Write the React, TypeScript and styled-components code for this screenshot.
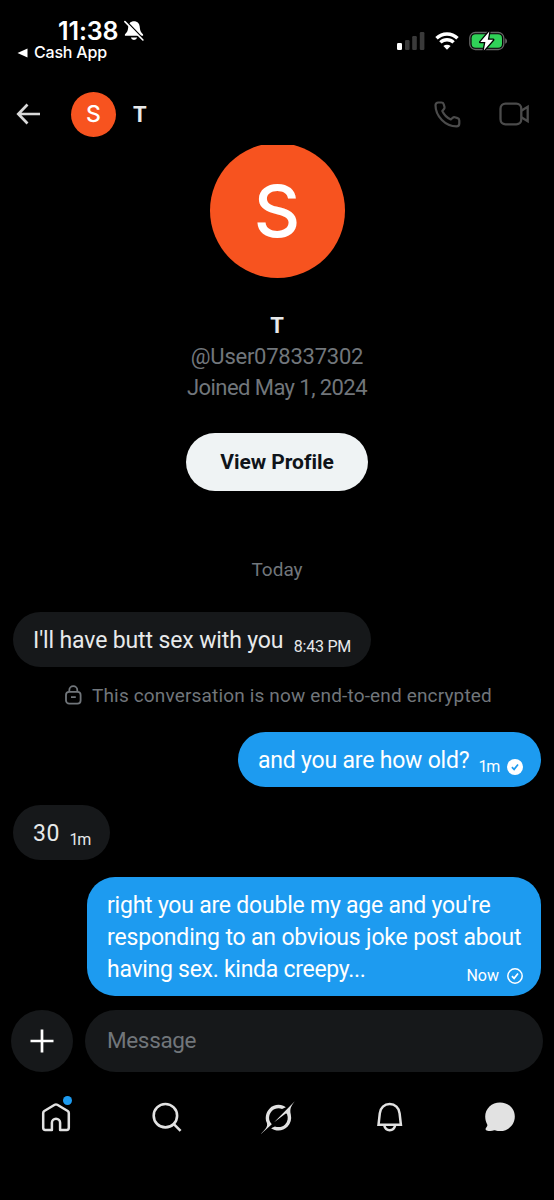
import React from 'react';
import styled, { createGlobalStyle } from 'styled-components';

const Global = createGlobalStyle`
  * { box-sizing: border-box; }
  body { margin: 0; background: #000; }
  button { border: 0; padding: 0; background: none; font: inherit; color: inherit; }
  svg { display: block; flex: none; }
`;

const Screen = styled.div`
  width: 554px;
  height: 1200px;
  display: flex;
  flex-direction: column;
  background: #000;
  color: #e7e9ea;
  overflow: hidden;
  font-family: Roboto, 'Liberation Sans', sans-serif;
`;

const StatusBar = styled.div`
  height: 83px;
  flex: none;
  display: flex;
  justify-content: space-between;
  padding: 18px 46px 0 17px;
  font-family: Inter, sans-serif;
  color: #fff;
`;
const ClockRow = styled.div`
  display: flex;
  align-items: center;
  gap: 5px;
  height: 26px;
  padding-left: 41px;
  font-size: 25px;
  line-height: 26px;
  font-weight: 600;
  letter-spacing: -0.1px;
`;
const BackToApp = styled.div`
  display: flex;
  align-items: center;
  gap: 6px;
  height: 17px;
  font-size: 16px;
  line-height: 17px;
  font-weight: 500;
  letter-spacing: -0.2px;
`;
const Signals = styled.div`
  display: flex;
  align-items: center;
  height: 46px;
  gap: 10px;
`;

const Header = styled.header`
  height: 62px;
  flex: none;
  display: flex;
  align-items: center;
  padding: 0 24px 0 16px;
`;
const Avatar = styled.div<{ $size: number; $font: number }>`
  width: ${(p) => p.$size}px;
  height: ${(p) => p.$size}px;
  flex: none;
  border-radius: 50%;
  background: #f7531f;
  color: #fff;
  display: flex;
  align-items: center;
  justify-content: center;
  font-family: Inter, sans-serif;
  font-weight: 500;
  font-size: ${(p) => p.$font}px;
`;
const HeaderAvatar = styled(Avatar)`
  margin-left: 30px;
`;
const HeaderName = styled.div`
  flex: 1;
  margin-left: 17px;
  font: 700 22px Roboto, sans-serif;
`;
const CallActions = styled.div`
  display: flex;
  align-items: center;
  gap: 38px;
  color: #4b4b4b;
`;

const Thread = styled.main`
  height: 864px;
  flex: none;
  overflow: hidden;
  display: flex;
  flex-direction: column;
  padding: 0 13px;
`;
const Profile = styled.section`
  display: flex;
  flex-direction: column;
  align-items: center;
  margin-top: -2px;
`;
const ProfileName = styled.div`
  margin-top: 32px;
  font: 700 22px/31px Roboto, sans-serif;
`;
const ProfileLine = styled.div<{ $spacing: number }>`
  font-size: 22px;
  line-height: 31px;
  color: #71767b;
  letter-spacing: ${(p) => p.$spacing}px;
`;
const ViewProfile = styled.button`
  width: 182px;
  height: 58px;
  margin-top: 30px;
  border-radius: 29px;
  background: #eff3f4;
  color: #0f1419;
  font: 700 21px Roboto, sans-serif;
  letter-spacing: -0.05px;
`;
const DayLabel = styled.div`
  margin-top: 66px;
  text-align: center;
  font-size: 19px;
  line-height: 26px;
  letter-spacing: 0px;
  color: #71767b;
`;
const Bubble = styled.div<{ $mine?: boolean; $width: number; $top: number; $tall?: boolean }>`
  align-self: ${(p) => (p.$mine ? 'flex-end' : 'flex-start')};
  width: ${(p) => p.$width}px;
  height: ${(p) => (p.$tall ? 119 : 55)}px;
  flex: none;
  margin-top: ${(p) => p.$top}px;
  padding: 13px 17px 0 20px;
  border-radius: 28px;
  background: ${(p) => (p.$mine ? '#1d9bf0' : '#16181a')};
  color: ${(p) => (p.$mine ? '#fff' : '#e7e9ea')};
  display: flex;
  justify-content: space-between;
`;
const Words = styled.div<{ $spacing?: number }>`
  font-size: 23px;
  line-height: 32px;
  white-space: nowrap;
  letter-spacing: ${(p) => p.$spacing ?? 0}px;
`;
const Lines = styled.div`
  display: flex;
  flex-direction: column;
`;
const LastLine = styled.div`
  display: flex;
  justify-content: space-between;
  width: 417px;
`;
const Meta = styled.div<{ $inset?: number; $spacing?: number }>`
  display: flex;
  align-items: center;
  gap: 7px;
  height: 17px;
  margin-top: 13px;
  margin-right: ${(p) => p.$inset ?? 0}px;
  font-size: 16px;
  letter-spacing: ${(p) => p.$spacing ?? 0}px;
  white-space: nowrap;
`;
const Notice = styled.div`
  display: flex;
  align-items: center;
  height: 26px;
  flex: none;
  margin: 15px 0 0 52px;
  gap: 10px;
  font-size: 19px;
  letter-spacing: 0.16px;
  color: #71767b;
  white-space: nowrap;
`;

const Composer = styled.footer`
  height: 63px;
  flex: none;
  display: flex;
  align-items: center;
  gap: 12px;
  padding: 0 11px;
`;
const AddButton = styled.button`
  width: 62px;
  height: 62px;
  border-radius: 50%;
  background: #16181a;
  display: flex;
  align-items: center;
  justify-content: center;
`;
const Field = styled.div`
  flex: 1;
  height: 62px;
  border-radius: 31px;
  background: #16181a;
  color: #71767b;
  padding-left: 22px;
  font-size: 22.5px;
  line-height: 61px;
  letter-spacing: -0.35px;
`;
const TabBar = styled.nav`
  flex: 1;
  display: flex;
  align-items: flex-start;
  justify-content: space-between;
  padding: 24px 33.5px 0 34.5px;
  color: #e2e2e2;
`;
const Tab = styled.button`
  position: relative;
  width: 42px;
  height: 42px;
  display: flex;
  align-items: center;
  justify-content: center;
`;
const Unread = styled.span`
  position: absolute;
  top: 0;
  right: 5px;
  width: 9px;
  height: 9px;
  border-radius: 50%;
  background: #1d9bf0;
`;

const MutedBell = () => (
  <svg width="20" height="22" viewBox="0 0 20 22">
    <path d="M10 1.2C6.700 1.200 4.600 3.300 4.300 6.500 3.900 11 3.300 12 .9 14.400v1.400h18.200v-1.400C16.700 12 16.100 11 15.700 6.500 15.400 3.300 13.300 1.200 10 1.200zM6.800 17.600a3.300 3.300 0 0 0 6.400 0z" fill="#fff" />
    <path d="M2.400 1.300l17.400 18.200" stroke="#000" strokeWidth="1.600" />
    <path d="M.9 1.600l18 18.400" stroke="#fff" strokeWidth="1.600" strokeLinecap="round" />
  </svg>
);
const Cellular = () => (
  <svg width="28" height="18" viewBox="0 0 28 18">
    <rect x="0" y="11" width="5" height="7" rx="1.3" fill="#fff" />
    <g fill="#3a3a3a">
      <rect x="8" y="8" width="4.6" height="10" rx="1.2" />
      <rect x="15.2" y="4" width="4.6" height="14" rx="1.2" />
      <rect x="22.8" y="0" width="4.6" height="18" rx="1.2" />
    </g>
  </svg>
);
const Wifi = () => (
  <svg width="24" height="18" viewBox="0 0 24 18">
    <g fill="none" stroke="#fff" strokeWidth="3.4">
      <path d="M1.5 6.3a15 15 0 0 1 21 0" />
      <path d="M5.4 10.4a9.4 9.4 0 0 1 13.2 0" />
    </g>
    <path d="M8.4 14.1a5.2 5.2 0 0 1 7.2 0L12 17.7z" fill="#fff" />
  </svg>
);
const Battery = () => (
  <svg width="39" height="20" viewBox="0 0 39 20">
    <rect x=".8" y="1.5" width="34" height="17" rx="5.5" fill="none" stroke="#656565" strokeWidth="1.3" />
    <rect x="2.6" y="3.3" width="30.4" height="13.4" rx="4" fill="#30d158" />
    <path d="M36.2 7.2v5.6c2.4-1 2.4-4.6 0-5.6z" fill="#656565" />
    <path d="M20.3.5L11.3 11h5.1L14.8 19.4 24.1 8.8h-5.3z" fill="#fff" stroke="#000" strokeWidth="2.6" paintOrder="stroke" strokeLinejoin="round" />
  </svg>
);
const Lock = () => (
  <svg width="17" height="20" viewBox="0 0 17 20" fill="none" stroke="#71767b" strokeWidth="1.8">
    <rect x="1" y="6.8" width="14.6" height="11.8" rx="3.2" />
    <path d="M4.3 6.8V5.2a4 4 0 0 1 8 0v1.6M6 12.2h4.8" />
  </svg>
);
const SeenBadge = () => (
  <svg width="18" height="18" viewBox="0 0 18 18">
    <circle cx="9" cy="9" r="8" fill="#fff" />
    <path d="M5.9 9.2l2.2 2.2 3.9-4.9" fill="none" stroke="#1d9bf0" strokeWidth="1.7" />
  </svg>
);
const SentBadge = () => (
  <svg width="18" height="18" viewBox="0 0 18 18" fill="none" stroke="#fff">
    <circle cx="9" cy="9" r="7.2" strokeWidth="1.5" />
    <path d="M5.9 9.2l2.2 2.2 3.9-4.9" strokeWidth="1.7" />
  </svg>
);

export default function App() {
  return (
    <>
      <Global />
      <Screen>
        <StatusBar>
          <div>
            <ClockRow>
              <span>11:38</span>
              <MutedBell />
            </ClockRow>
            <BackToApp>
              <svg width="11" height="10" viewBox="0 0 11 10"><path d="M.5 5L10.5.5v9z" fill="#fff" /></svg>
              <span>Cash App</span>
            </BackToApp>
          </div>
          <Signals>
            <Cellular />
            <Wifi />
            <Battery />
          </Signals>
        </StatusBar>

        <Header>
          <svg width="25" height="22" viewBox="0 0 25 22" fill="none" stroke="#d9d9d9" strokeWidth="2.7">
            <path d="M11.5 1.5L2.3 11l9.2 9.5M2.5 11H24" />
          </svg>
          <HeaderAvatar $size={45} $font={23}>S</HeaderAvatar>
          <HeaderName>T</HeaderName>
          <CallActions>
            <svg width="27" height="27" viewBox="0 0 27 27" fill="none" stroke="currentColor" strokeWidth="2.2" strokeLinejoin="round">
              <path d="M4.2 1.5h3.2c1.1 0 2 .7 2.300 1.700l.8 2.800c.2.800 0 1.500-.5 2.100L8.300 10c1.600 3.500 4.900 6.900 8.500 8.500l1.900-1.700c.6-.5 1.300-.7 2.100-.5l2.800.8c1 .3 1.700 1.200 1.700 2.300v3.100c0 1.600-1.200 2.900-2.800 2.900C11.500 25.400 1.500 15.300 1.500 4.300c0-1.600 1.200-2.800 2.700-2.800z" />
            </svg>
            <svg width="31" height="24" viewBox="0 0 31 24" fill="none" stroke="currentColor" strokeWidth="2.3">
              <rect x="1.5" y="1.7" width="20.8" height="20.6" rx="5" />
              <path d="M22.3 8.800l6.400-4v14.400l-6.400-4" />
            </svg>
          </CallActions>
        </Header>

        <Thread>
          <Profile>
            <Avatar $size={135} $font={72}>S</Avatar>
            <ProfileName>T</ProfileName>
            <ProfileLine $spacing={-0.25}>@User078337302</ProfileLine>
            <ProfileLine $spacing={-0.57}>Joined May 1, 2024</ProfileLine>
            <ViewProfile>View Profile</ViewProfile>
          </Profile>
          <DayLabel>Today</DayLabel>
          <Bubble $width={358} $top={29}>
            <Words $spacing={-0.13}>I'll have butt sex with you</Words>
            <Meta $inset={3} $spacing={-0.25}>8:43 PM</Meta>
          </Bubble>
          <Notice>
            <Lock />
            <span>This conversation is now end-to-end encrypted</span>
          </Notice>
          <Bubble $mine $width={303} $top={24}>
            <Words $spacing={-0.2}>and you are how old?</Words>
            <Meta $spacing={-1.2}>1m<SeenBadge /></Meta>
          </Bubble>
          <Bubble $width={97} $top={18}>
            <Words $spacing={0.6}>30</Words>
            <Meta $inset={3} $spacing={-1.2}>1m</Meta>
          </Bubble>
          <Bubble $mine $tall $width={454} $top={17}>
            <Lines>
              <Words $spacing={-0.22}>right you are double my age and you're</Words>
              <Words $spacing={-0.17}>responding to an obvious joke post about</Words>
              <LastLine>
                <Words $spacing={-0.28}>having sex. kinda creepy...</Words>
                <Meta>Now<SentBadge /></Meta>
              </LastLine>
            </Lines>
          </Bubble>
        </Thread>

        <Composer>
          <AddButton>
            <svg width="24" height="24" viewBox="0 0 24 24"><path d="M12 .5v23M.5 12h23" stroke="#fff" strokeWidth="2.7" /></svg>
          </AddButton>
          <Field>Message</Field>
        </Composer>

        <TabBar>
          <Tab>
            <svg width="30" height="30" viewBox="0 0 30 30" fill="none" stroke="currentColor" strokeWidth="2.5" strokeLinejoin="round">
              <path d="M2.2 11.1c0-.9.4-1.6 1.100-2.100l10.400-6.200a2.500 2.500 0 0 1 2.600 0L26.700 9c.7.5 1.100 1.200 1.100 2.100v14.700c0 1.200-.9 2.100-2.100 2.100h-6.600V20.800a4.100 4.100 0 0 0-8.200 0v7.100H4.300c-1.200 0-2.100-.9-2.100-2.100z" />
            </svg>
            <Unread />
          </Tab>
          <Tab>
            <svg width="30" height="30" viewBox="0 0 30 30" fill="none" stroke="currentColor" strokeWidth="2.6">
              <circle cx="13.4" cy="13.7" r="11.7" />
              <path d="M21.6 21.9l7 7" />
            </svg>
          </Tab>
          <Tab>
            <svg width="34" height="33" viewBox="0 0 33 32" fill="currentColor">
              <path d="M12.745 20.54l10.97-8.19c.539-.4 1.307-.244 1.564.38 1.349 3.288.746 7.241-1.938 9.955-2.683 2.714-6.417 3.31-9.83 1.954l-3.728 1.745c5.347 3.697 11.84 2.782 15.898-1.324 3.219-3.255 4.216-7.692 3.284-11.693l.008.009c-1.351-5.878.332-8.227 3.782-13.031L33 0l-4.54 4.59v-.014L12.743 20.544m-2.263 1.987c-3.837-3.707-3.175-9.446.1-12.755 2.42-2.449 6.388-3.448 9.852-1.979l3.72-1.737c-.67-.49-1.53-1.017-2.515-1.387-4.455-1.854-9.789-.931-13.41 2.728-3.483 3.523-4.579 8.94-2.697 13.561 1.405 3.454-.899 5.898-3.22 8.364C1.49 30.2.666 31.074 0 32l10.478-9.466" />
            </svg>
          </Tab>
          <Tab>
            <svg width="28" height="30" viewBox="-0.7 0 28 30" fill="none" stroke="currentColor" strokeWidth="2.5">
              <path d="M2.8 22.8L4.1 11.3C4.600 5.700 8.700 2 14 2s9.400 3.700 9.900 9.300l1.300 11.500z" />
              <path d="M8.500 23.200c.7 3 2.800 5 5.500 5s4.800-2 5.500-5" />
            </svg>
          </Tab>
          <Tab>
            <svg width="32" height="30" viewBox="0.500 0 32 30" fill="currentColor">
              <path d="M16.500.5C8.200.5 1.700 6.700 1.700 14.500c0 3 .8 5.500 1.900 7.700.6 1.200.2 2.200-.8 3.200-1.100 1-.9 2.700.4 3 2.500.7 5.200.7 7.400-.1.500-.2 1-.1 1.500.1 1.400.5 2.900.7 4.500.7 8.400 0 14.700-6.500 14.700-14.500S25 .5 16.500.5z" />
            </svg>
          </Tab>
        </TabBar>
      </Screen>
    </>
  );
}
